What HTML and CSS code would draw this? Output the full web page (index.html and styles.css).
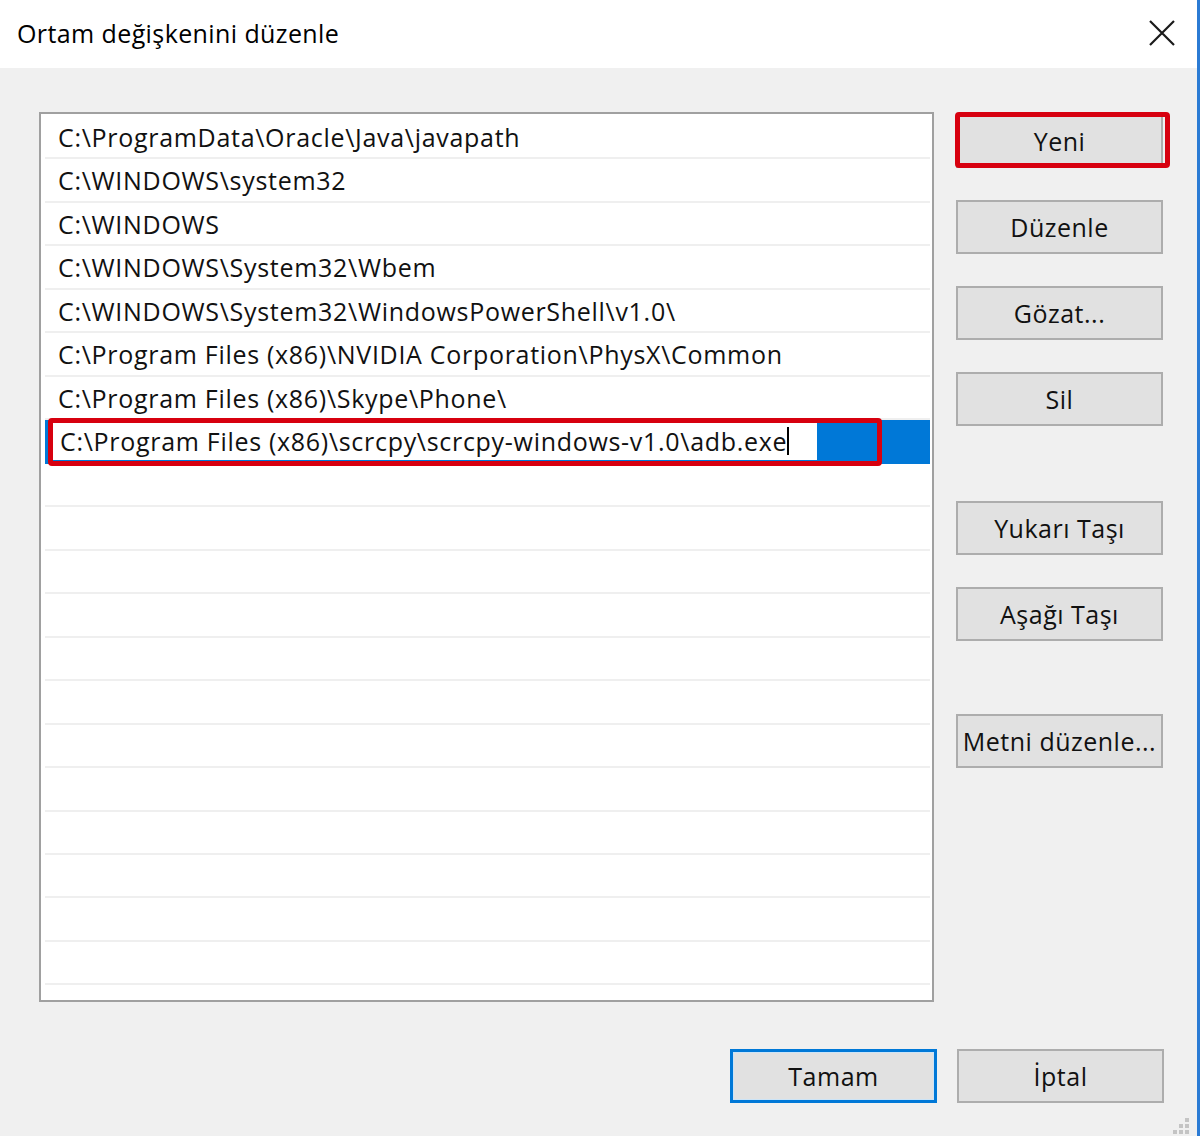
FILE: index.html
```html
<!DOCTYPE html>
<html lang="tr">
<head>
<meta charset="utf-8">
<title>Ortam değişkenini düzenle</title>
<link rel="stylesheet" href="styles.css">
</head>
<body>
<div class="window">
  <div class="titlebar">
    <span class="title">Ortam değişkenini düzenle</span>
    <svg class="close" width="26" height="26" viewBox="0 0 26 26"><path d="M1 1 L25 25 M25 1 L1 25" stroke="#1a1a1a" stroke-width="2.2" fill="none"/></svg>
  </div>
  <div class="content">
    <div class="main">
      <div class="list">
        <div class="row">C:\ProgramData\Oracle\Java\javapath</div>
        <div class="row">C:\WINDOWS\system32</div>
        <div class="row">C:\WINDOWS</div>
        <div class="row">C:\WINDOWS\System32\Wbem</div>
        <div class="row">C:\WINDOWS\System32\WindowsPowerShell\v1.0\</div>
        <div class="row">C:\Program Files (x86)\NVIDIA Corporation\PhysX\Common</div>
        <div class="row">C:\Program Files (x86)\Skype\Phone\</div>
        <div class="row selected">
          <div class="editbox"><span class="edittext">C:\Program Files (x86)\scrcpy\scrcpy-windows-v1.0\adb.exe</span><span class="caret"></span></div>
          <div class="annot annot-row"></div>
        </div>
        <div class="row"></div>
        <div class="row"></div>
        <div class="row"></div>
        <div class="row"></div>
        <div class="row"></div>
        <div class="row"></div>
        <div class="row"></div>
        <div class="row"></div>
        <div class="row"></div>
        <div class="row"></div>
        <div class="row"></div>
        <div class="row"></div>
        <div class="row"></div>
      </div>
      <div class="side">
        <div class="btn-wrap">
          <button class="btn">Yeni</button>
          <div class="annot annot-btn"></div>
        </div>
        <button class="btn">Düzenle</button>
        <button class="btn">Gözat...</button>
        <button class="btn">Sil</button>
        <button class="btn group">Yukarı Taşı</button>
        <button class="btn">Aşağı Taşı</button>
        <button class="btn group2">Metni düzenle...</button>
      </div>
    </div>
    <div class="footer">
      <button class="btn default">Tamam</button>
      <button class="btn">İptal</button>
    </div>
  </div>
  <svg class="grip" width="20" height="20" viewBox="0 0 20 20">
    <rect x="14" y="2" width="4" height="4" fill="#c4c4c4"/>
    <rect x="8" y="8" width="4" height="4" fill="#c4c4c4"/>
    <rect x="14" y="8" width="4" height="4" fill="#c4c4c4"/>
    <rect x="2" y="14" width="4" height="4" fill="#c4c4c4"/>
    <rect x="8" y="14" width="4" height="4" fill="#c4c4c4"/>
    <rect x="14" y="14" width="4" height="4" fill="#c4c4c4"/>
  </svg>
</div>
</body>
</html>
```
FILE: styles.css
```css
* { box-sizing: border-box; }
html, body { margin: 0; padding: 0; }
body {
  font-family: "Open Sans", "Noto Sans", "DejaVu Sans", sans-serif;
  color: #111;
  background: #f0f0f0;
}
.window {
  position: relative;
  width: 1200px;
  height: 1136px;
  overflow: hidden;
  border-right: 3px solid #2b7bd4;
  background: #f0f0f0;
}
.titlebar {
  height: 68px;
  background: #fff;
  display: flex;
  align-items: center;
  justify-content: space-between;
  padding: 0 22px 0 17px;
}
.title {
  font-size: 25px;
  letter-spacing: 0.4px;
  color: #000;
  margin-top: -2px;
}
.close { margin-top: -2px; }
.content {
  padding: 44px 0 0 39px;
}
.main {
  display: flex;
  align-items: flex-start;
}
.list {
  width: 895px;
  height: 890px;
  border: 2px solid #a0a0a0;
  background: #fff;
  padding: 2px 2px 0 4px;
  overflow: hidden;
}
.row {
  position: relative;
  height: 43.47px;
  border-bottom: 2px solid #efefef;
  font-size: 25px;
  letter-spacing: 0.7px;
  line-height: 42px;
  padding-left: 13px;
  white-space: nowrap;
  color: #111;
}
.row.selected {
  background: #0078d7;
  padding: 2px 113px 2px 5px;
  border-bottom-color: #0078d7;
}
.editbox {
  height: 100%;
  background: #fff;
  padding-left: 10px;
  display: flex;
  align-items: center;
  line-height: 1;
  overflow: hidden;
}
.caret {
  display: inline-block;
  flex: none;
  width: 2px;
  height: 28px;
  background: #000;
  margin-left: 0;
}
.annot {
  position: absolute;
  border: 5px solid #d7000f;
  border-radius: 4px;
  pointer-events: none;
}
.annot-row {
  left: 3px;
  top: -2px;
  width: 834px;
  height: 48px;
}
.side {
  margin-left: 22px;
  padding-top: 2px;
  display: flex;
  flex-direction: column;
  gap: 32px;
  width: 207px;
}
.btn-wrap { position: relative; }
.annot-btn {
  left: -1px;
  top: -2px;
  width: 215px;
  height: 56px;
}
.btn {
  width: 207px;
  height: 54px;
  background: #e1e1e1;
  border: 2px solid #adadad;
  font-family: "Open Sans", "Noto Sans", "DejaVu Sans", sans-serif;
  font-size: 25px;
  letter-spacing: 0.5px;
  color: #111;
  padding: 0;
  display: block;
  white-space: nowrap;
}
.btn.group { margin-top: 43px; }
.btn.group2 { margin-top: 41px; }
.footer {
  display: flex;
  gap: 20px;
  margin-top: 47px;
  padding-left: 691px;
}
.btn.default {
  border: 3px solid #0078d7;
  box-shadow: inset 0 0 0 1px #cce4f7;
}
.grip {
  position: absolute;
  right: 6px;
  bottom: 0;
}
```
